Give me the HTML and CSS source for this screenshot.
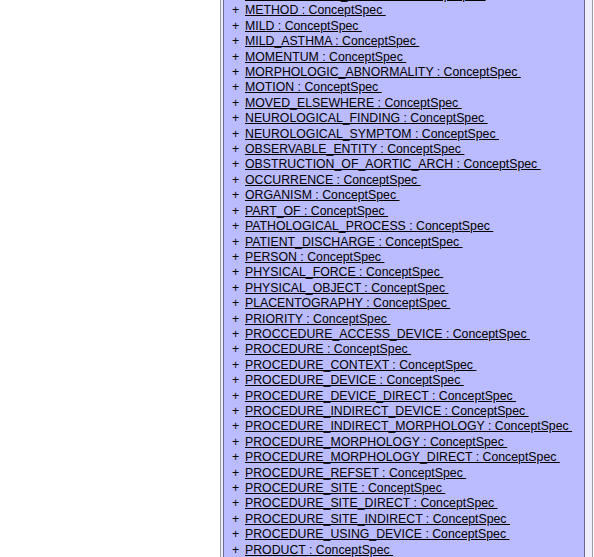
FILE: index.html
```html
<!DOCTYPE html>
<html>
<head>
<meta charset="utf-8">
<link rel="stylesheet" href="styles.css">
</head>
<body>
<div class="page">
  <div class="side"></div>
  <div class="frame">
    <div class="tree">
      <ul class="list">
        <li><span class="exp">+</span><a href="#">MEASUREMENT_FINDING : ConceptSpec&nbsp;</a></li>
        <li><span class="exp">+</span><a href="#">METHOD : ConceptSpec&nbsp;</a></li>
        <li><span class="exp">+</span><a href="#">MILD : ConceptSpec&nbsp;</a></li>
        <li><span class="exp">+</span><a href="#">MILD_ASTHMA : ConceptSpec&nbsp;</a></li>
        <li><span class="exp">+</span><a href="#">MOMENTUM : ConceptSpec&nbsp;</a></li>
        <li><span class="exp">+</span><a href="#">MORPHOLOGIC_ABNORMALITY : ConceptSpec&nbsp;</a></li>
        <li><span class="exp">+</span><a href="#">MOTION : ConceptSpec&nbsp;</a></li>
        <li><span class="exp">+</span><a href="#">MOVED_ELSEWHERE : ConceptSpec&nbsp;</a></li>
        <li><span class="exp">+</span><a href="#">NEUROLOGICAL_FINDING : ConceptSpec&nbsp;</a></li>
        <li><span class="exp">+</span><a href="#">NEUROLOGICAL_SYMPTOM : ConceptSpec&nbsp;</a></li>
        <li><span class="exp">+</span><a href="#">OBSERVABLE_ENTITY : ConceptSpec&nbsp;</a></li>
        <li><span class="exp">+</span><a href="#">OBSTRUCTION_OF_AORTIC_ARCH : ConceptSpec&nbsp;</a></li>
        <li><span class="exp">+</span><a href="#">OCCURRENCE : ConceptSpec&nbsp;</a></li>
        <li><span class="exp">+</span><a href="#">ORGANISM : ConceptSpec&nbsp;</a></li>
        <li><span class="exp">+</span><a href="#">PART_OF : ConceptSpec&nbsp;</a></li>
        <li><span class="exp">+</span><a href="#">PATHOLOGICAL_PROCESS : ConceptSpec&nbsp;</a></li>
        <li><span class="exp">+</span><a href="#">PATIENT_DISCHARGE : ConceptSpec&nbsp;</a></li>
        <li><span class="exp">+</span><a href="#">PERSON : ConceptSpec&nbsp;</a></li>
        <li><span class="exp">+</span><a href="#">PHYSICAL_FORCE : ConceptSpec&nbsp;</a></li>
        <li><span class="exp">+</span><a href="#">PHYSICAL_OBJECT : ConceptSpec&nbsp;</a></li>
        <li><span class="exp">+</span><a href="#">PLACENTOGRAPHY : ConceptSpec&nbsp;</a></li>
        <li><span class="exp">+</span><a href="#">PRIORITY : ConceptSpec&nbsp;</a></li>
        <li><span class="exp">+</span><a href="#">PROCCEDURE_ACCESS_DEVICE : ConceptSpec&nbsp;</a></li>
        <li><span class="exp">+</span><a href="#">PROCEDURE : ConceptSpec&nbsp;</a></li>
        <li><span class="exp">+</span><a href="#">PROCEDURE_CONTEXT : ConceptSpec&nbsp;</a></li>
        <li><span class="exp">+</span><a href="#">PROCEDURE_DEVICE : ConceptSpec&nbsp;</a></li>
        <li><span class="exp">+</span><a href="#">PROCEDURE_DEVICE_DIRECT : ConceptSpec&nbsp;</a></li>
        <li><span class="exp">+</span><a href="#">PROCEDURE_INDIRECT_DEVICE : ConceptSpec&nbsp;</a></li>
        <li><span class="exp">+</span><a href="#">PROCEDURE_INDIRECT_MORPHOLOGY : ConceptSpec&nbsp;</a></li>
        <li><span class="exp">+</span><a href="#">PROCEDURE_MORPHOLOGY : ConceptSpec&nbsp;</a></li>
        <li><span class="exp">+</span><a href="#">PROCEDURE_MORPHOLOGY_DIRECT : ConceptSpec&nbsp;</a></li>
        <li><span class="exp">+</span><a href="#">PROCEDURE_REFSET : ConceptSpec&nbsp;</a></li>
        <li><span class="exp">+</span><a href="#">PROCEDURE_SITE : ConceptSpec&nbsp;</a></li>
        <li><span class="exp">+</span><a href="#">PROCEDURE_SITE_DIRECT : ConceptSpec&nbsp;</a></li>
        <li><span class="exp">+</span><a href="#">PROCEDURE_SITE_INDIRECT : ConceptSpec&nbsp;</a></li>
        <li><span class="exp">+</span><a href="#">PROCEDURE_USING_DEVICE : ConceptSpec&nbsp;</a></li>
        <li><span class="exp">+</span><a href="#">PRODUCT : ConceptSpec&nbsp;</a></li>
      </ul>
    </div>
  </div>
</div>
</body>
</html>
```

FILE: styles.css
```css
html, body {
  margin: 0;
  padding: 0;
  background: #ffffff;
  overflow: hidden;
}

.page {
  display: flex;
  height: 557px;
  overflow: hidden;
  font-family: "Liberation Sans", Arial, sans-serif;
  font-size: 12.3px;
  color: #000;
}

.side {
  width: 220px;
  flex: none;
}

.frame {
  width: 362px;
  flex: none;
  background: #eeeeff;
  border-left: 1px solid #9a9aaa;
  border-right: 1px solid #9a9aaa;
  padding: 0 7px 0 2px;
}

.tree {
  background: #bbbbff;
  border-left: 1px solid #6a6a9a;
  border-right: 1px solid #6a6a9a;
  height: 100%;
  overflow: hidden;
}

.list {
  list-style: none;
  margin: -12px 0 0 0;
  padding: 0 0 0 8px;
}

.list li {
  line-height: 15.4px;
  white-space: nowrap;
}

.exp {
  display: inline-block;
  width: 13px;
  color: #000;
}

.list a {
  color: #000;
  text-decoration: underline;
}
```
